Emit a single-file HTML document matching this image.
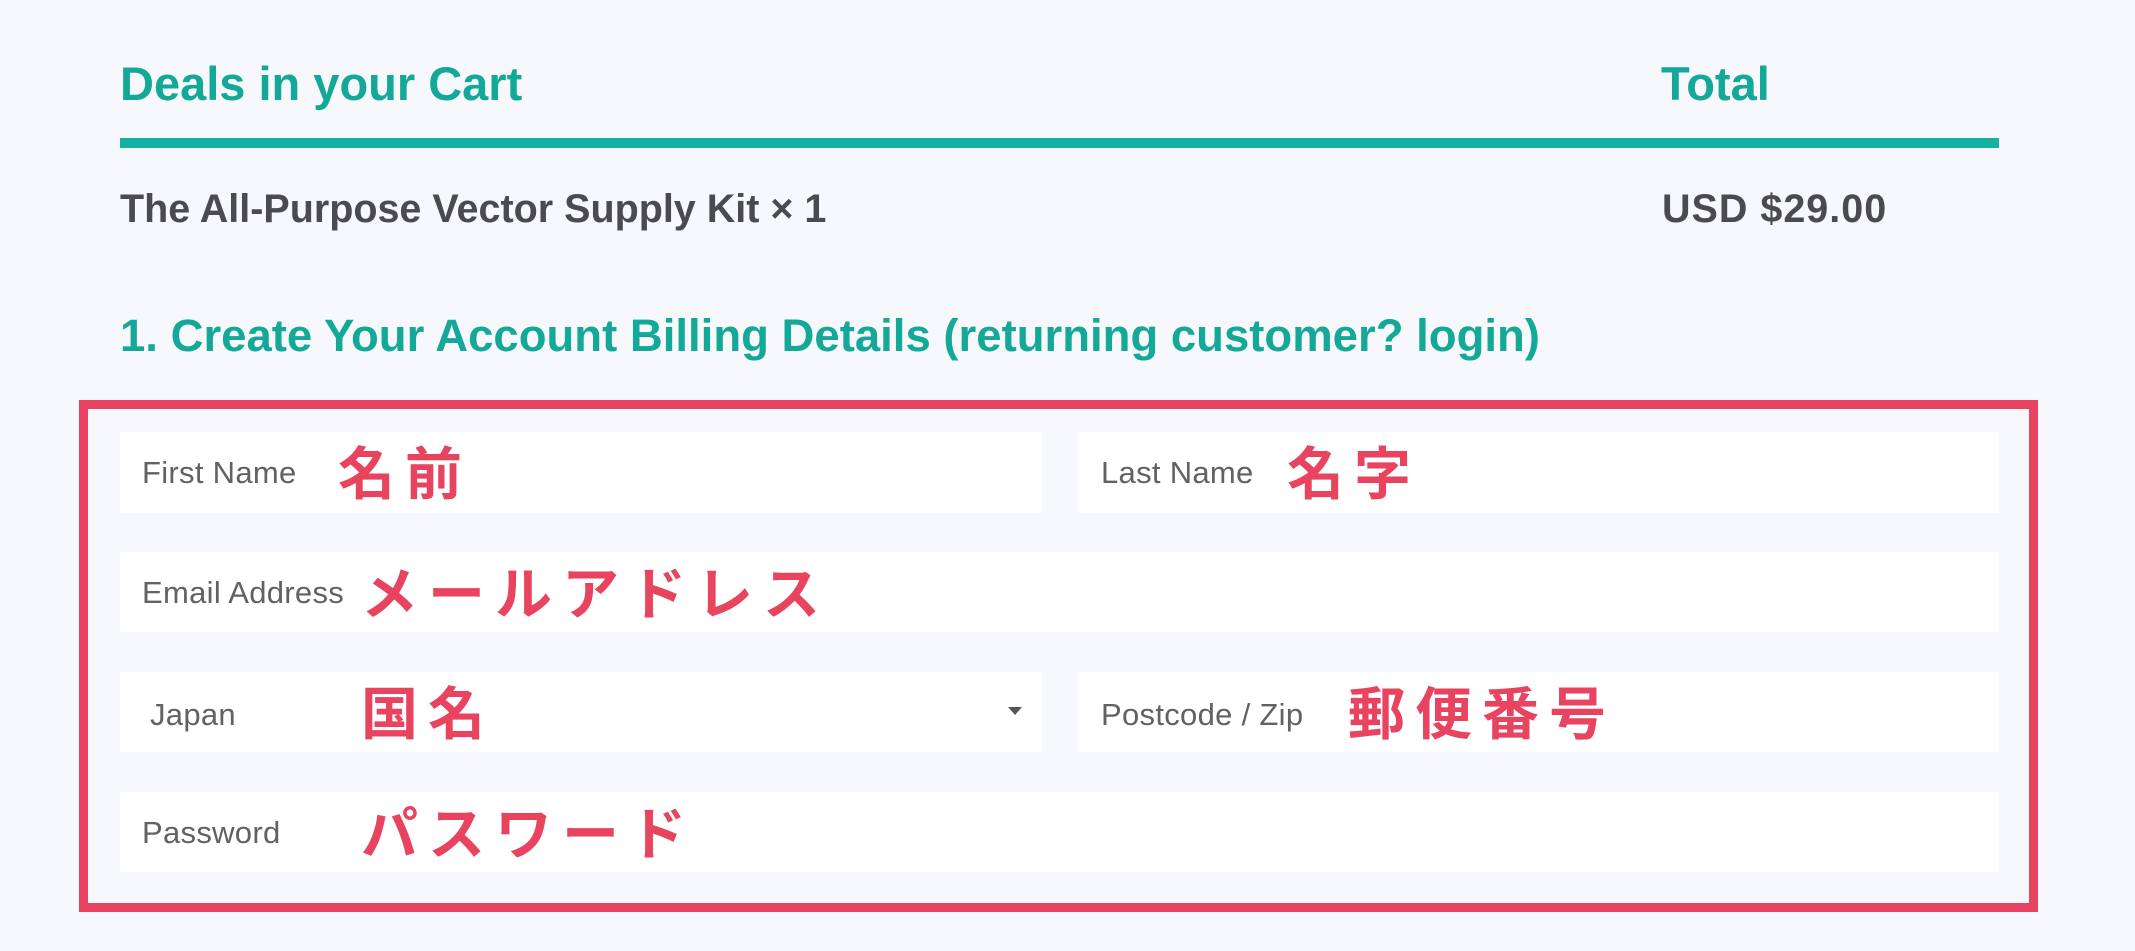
<!DOCTYPE html>
<html><head><meta charset="utf-8"><style>
*{margin:0;padding:0;box-sizing:border-box}
body{width:2135px;height:951px;background:#f6f8fb;font-family:"Liberation Sans","Noto Sans CJK JP",sans-serif;position:relative;overflow:hidden}
.a{position:absolute;white-space:nowrap}
.teal{color:#14a898;font-weight:bold}
.dark{color:#4b4b4f;font-weight:bold;font-size:39.5px}
.inp{position:absolute;background:#fff}
.lbl{position:absolute;color:#616166;font-size:31px;letter-spacing:0.3px;white-space:nowrap;transform-origin:left center}
.jp{position:absolute;color:#e8435f;font-size:57px;font-weight:bold;font-family:"Noto Sans CJK JP",sans-serif;white-space:nowrap;letter-spacing:10px;line-height:1}
</style></head><body>
<div class="a teal" style="left:120px;top:58px;font-size:47px;line-height:52px">Deals in your Cart</div>
<div class="a teal" style="left:1661px;top:58px;font-size:47px;line-height:52px">Total</div>
<div style="position:absolute;left:120px;top:138px;width:1879px;height:10px;background:#13b1a2"></div>
<div class="a dark" style="left:120px;top:186px;line-height:46px">The All-Purpose Vector Supply Kit × 1</div>
<div class="a dark" style="left:1662px;top:186px;line-height:46px;letter-spacing:1px">USD $29.00</div>
<div class="a teal" style="left:120px;top:310px;font-size:45.5px;line-height:52px">1. Create Your Account Billing Details (returning customer? login)</div>
<div style="position:absolute;left:79px;top:400px;width:1959px;height:512px;border:9px solid #e84462"></div>
<div class="inp" style="left:120px;top:432px;width:922px;height:81px"></div>
<div class="inp" style="left:1078px;top:432px;width:921px;height:81px"></div>
<div class="inp" style="left:120px;top:552px;width:1879px;height:80px"></div>
<div class="inp" style="left:120px;top:672px;width:922px;height:80px"></div>
<div class="inp" style="left:1078px;top:672px;width:921px;height:80px"></div>
<div class="inp" style="left:120px;top:792px;width:1879px;height:80px"></div>
<div class="lbl" style="left:142px;top:455px">First Name</div>
<div class="lbl" style="left:1101px;top:455px">Last Name</div>
<div class="lbl" style="left:142px;top:575px">Email Address</div>
<div class="lbl" style="left:150px;top:697px">Japan</div>
<div class="lbl" style="left:1101px;top:697px">Postcode / Zip</div>
<div class="lbl" style="left:142px;top:815px">Password</div>
<div style="position:absolute;left:1008px;top:707px;width:0;height:0;border-left:7px solid transparent;border-right:7px solid transparent;border-top:8px solid #555"></div>
<div class="jp" style="left:338px;top:442px">名前</div>
<div class="jp" style="left:1287px;top:442px">名字</div>
<div class="jp" style="left:361px;top:562px">メールアドレス</div>
<div class="jp" style="left:361px;top:682px">国名</div>
<div class="jp" style="left:1348px;top:682px">郵便番号</div>
<div class="jp" style="left:361px;top:802px">パスワード</div>
</body></html>
